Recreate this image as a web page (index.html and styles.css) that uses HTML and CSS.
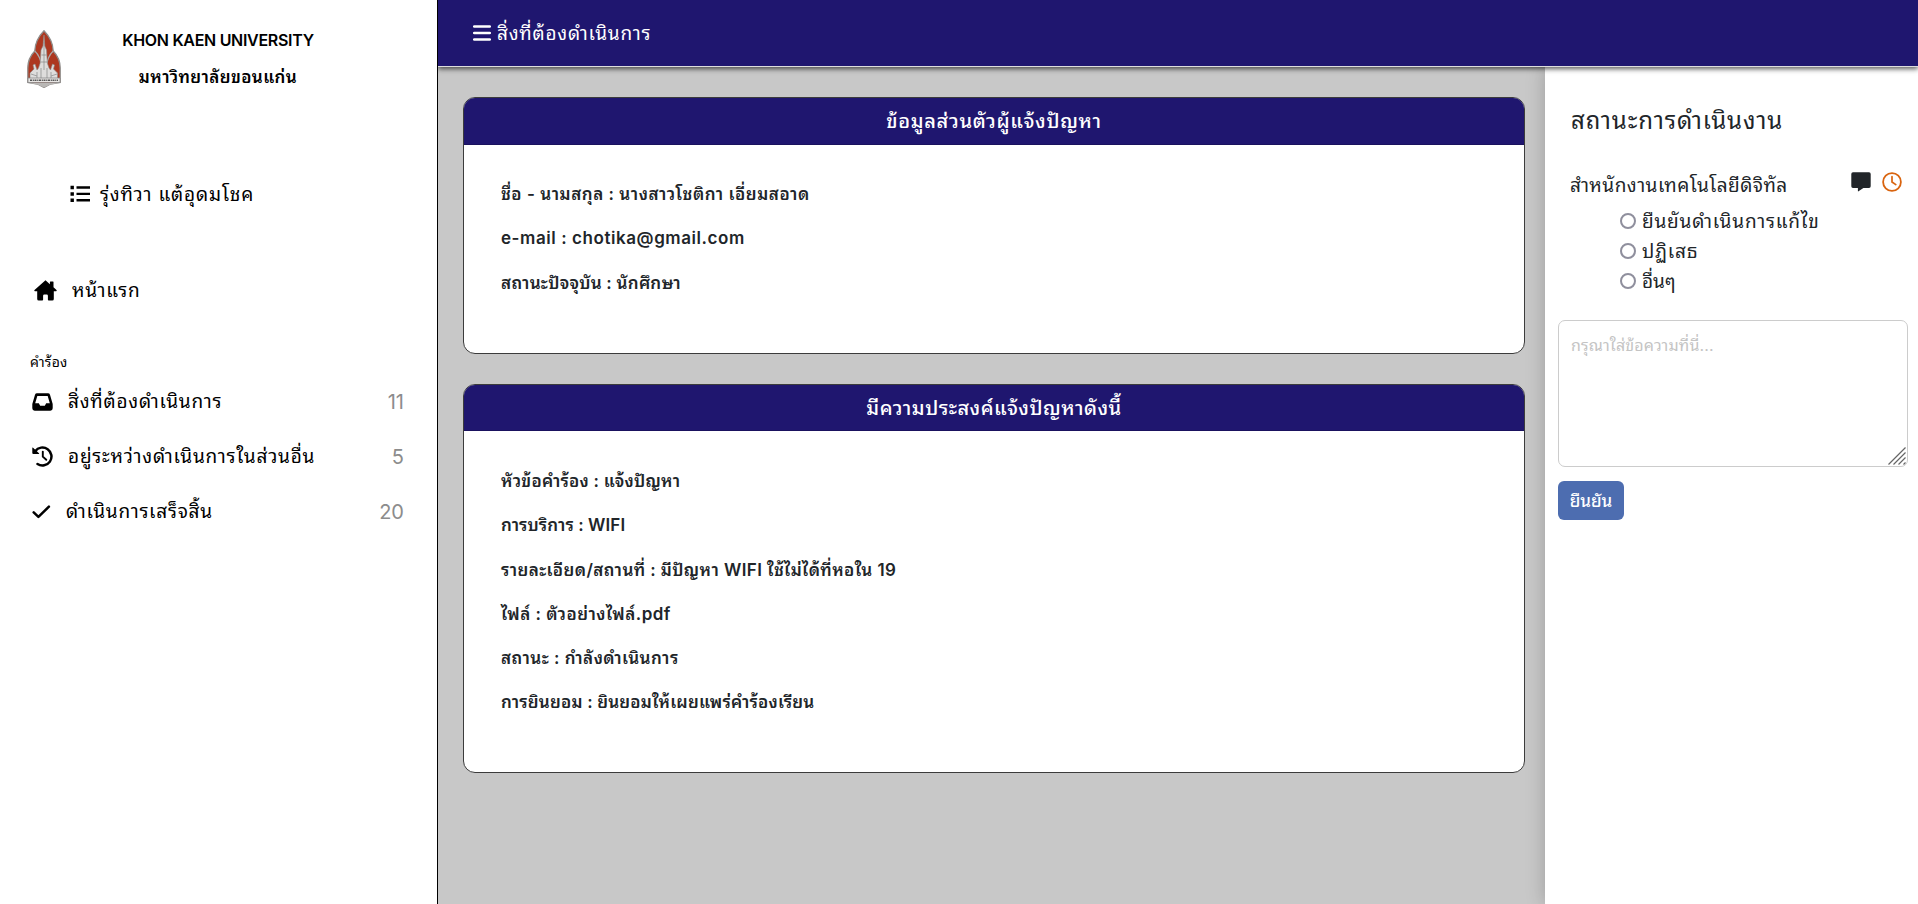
FILE: index.html
```html
<!DOCTYPE html>
<html lang="th">
<head>
<meta charset="utf-8">
<title>สิ่งที่ต้องดำเนินการ</title>
<link rel="stylesheet" href="styles.css">
</head>
<body>
<div class="app">
  <aside class="sidebar">
    <div class="brand">
      <svg class="logo" viewBox="0 0 34 58" width="34" height="58">
        <path d="M17 .8C11 7 8 14 7.8 21 3 26 .8 31 .8 38v14.500l9.700 1.500L17 57.500l6.500-3.500 9.700-1.500V38c0-7-2.200-12-7-17C26 14 23 7 17 .8z" fill="#ad3820" stroke="#8f8d8b" stroke-width="1.300"/>
        <path d="M7.800 21C12 25 14 30 15 37M26.200 21C22 25 20 30 19 37" fill="none" stroke="#aaa" stroke-width="1.200"/>
        <path d="M17 5l.8 11 1.700 4 .8 13 1.700 5 1.500 2 2-6 2 1-1 4 4 4v8H3V43l4-4-1-4 2-1 2 6 1.500-2 1.700-5L14 20l2-4z" fill="#dedddc" stroke="#8b8988" stroke-width=".6"/>
        <path d="M17 12v28M14.500 25h5M13.500 32h7M10 42v6M24 42v6M14 38v10M20 38v10M4 44l6 2M30 44l-6 2" fill="none" stroke="#888" stroke-width=".7"/>
        <path d="M1 48h32v4.500H1z" fill="#e8e6e4" stroke="#888" stroke-width=".8"/>
        <path d="M3 50.300h28" stroke="#555" stroke-width="1.600" stroke-dasharray="2 .7 1.200 .6"/>
        <path d="M1.500 53h31l-9 1.500-6.500 3-6.500-3z" fill="#b9b7b5"/>
      </svg>
      <div class="brand-text">
        <span class="brand-en">KHON KAEN UNIVERSITY</span>
        <span class="brand-th">มหาวิทยาลัยขอนแก่น</span>
      </div>
    </div>
    <div class="user">
      <svg width="20" height="18" viewBox="0 0 20 18"><path d="M.5.800h3.400v3.400H.5zM.5 7.300h3.400v3.400H.5zM.5 13.600h3.400V17H.5zM6.500 1.300H20v2.400H6.500zM6.500 7.700H20v2.400H6.500zM6.500 14H20v2.400H6.500z"/></svg>
      <span class="t-user">รุ่งทิวา แต้อุดมโชค</span>
    </div>
    <div class="home">
      <svg width="23" height="21" viewBox="0 0 23 21"><path d="M11.500.3L.5 10q-.5.500 0 1l.4.300H3.200V19q0 1.500 1.500 1.500h3.600q.8 0 .8-.8v-4q0-1.200 1.200-1.200h2.400q1.200 0 1.200 1.200v4q0 .8.800.8h3.600q1.500 0 1.500-1.500v-7.700h2.300l.4-.3q.5-.5 0-1L19.500 7.200V2q0-.5-.5-.5h-2.600q-.5 0-.5.500v2.200z"/></svg>
      <span class="t-home">หน้าแรก</span>
    </div>
    <div class="group">คำร้อง</div>
    <a class="item">
      <svg width="21" height="18" viewBox="0 0 21 18"><path fill-rule="evenodd" d="M5 .3h11q1.500 0 2 1.400l2.400 8.300q.3.700.3 1.500v3.800q0 2.400-2.400 2.400H2.700Q.3 17.700.3 15.300v-3.800q0-.8.300-1.500L3 1.700Q3.500.3 5 .3zM5.300 2.900L3.200 10.200h3.600l1.400 2.500h4.600l1.400-2.500h3.600L15.700 2.900z"/></svg>
      <span class="t-todo">สิ่งที่ต้องดำเนินการ</span><b class="count">11</b>
    </a>
    <a class="item">
      <svg width="21" height="21" viewBox="0 0 21 21"><path d="M3.200 5.200A9 9 0 1 1 5.500 18" fill="none" stroke="#000" stroke-width="2.500" stroke-linecap="round"/><path d="M.3 2q0-1 .8-.3L7 7.200q.6.700-.3.700H1.300q-1 0-1-1z"/><path d="M10.800 5.600v5l3.500 3.200" fill="none" stroke="#000" stroke-width="1.900" stroke-linecap="round"/></svg>
      <span class="t-wait">อยู่ระหว่างดำเนินการในส่วนอื่น</span><b class="count">5</b>
    </a>
    <a class="item">
      <svg width="19" height="14" viewBox="0 0 19 14"><path d="M1.700 7.400l4.700 4.500L16.900 1.700" fill="none" stroke="#000" stroke-width="2.500" stroke-linecap="round" stroke-linejoin="round"/></svg>
      <span class="t-done">ดำเนินการเสร็จสิ้น</span><b class="count">20</b>
    </a>
  </aside>
  <div class="page">
    <header class="topbar">
      <svg width="18" height="16" viewBox="0 0 18 16"><path d="M1.200 1.500h15.600M1.200 8h15.600M1.200 14.500h15.600" stroke="#fff" stroke-width="2.600" stroke-linecap="round"/></svg>
      <span class="t-todo">สิ่งที่ต้องดำเนินการ</span>
    </header>
    <div class="content">
      <main class="main">
        <section class="card person">
          <h2 class="card-head"><span class="h-one">ข้อมูลส่วนตัวผู้แจ้งปัญหา</span></h2>
          <div class="card-body">
            <p><span class="p1">ชื่อ - นามสกุล : นางสาวโชติกา เอี่ยมสอาด</span></p>
            <p><span class="p2">e-mail : chotika@gmail.com</span></p>
            <p><span class="p3">สถานะปัจจุบัน : นักศึกษา</span></p>
          </div>
        </section>
        <section class="card request">
          <h2 class="card-head"><span class="h-two">มีความประสงค์แจ้งปัญหาดังนี้</span></h2>
          <div class="card-body">
            <p><span class="r1">หัวข้อคำร้อง : แจ้งปัญหา</span></p>
            <p><span class="r2">การบริการ : WIFI</span></p>
            <p><span class="r3">รายละเอียด/สถานที่ : มีปัญหา WIFI ใช้ไม่ได้ที่หอใน 19</span></p>
            <p><span class="r4">ไฟล์ : ตัวอย่างไฟล์.pdf</span></p>
            <p><span class="r5">สถานะ : กำลังดำเนินการ</span></p>
            <p><span class="r6">การยินยอม : ยินยอมให้เผยแพร่คำร้องเรียน</span></p>
          </div>
        </section>
      </main>
      <aside class="status">
        <h1 class="status-title"><span class="t-status">สถานะการดำเนินงาน</span></h1>
        <div class="office">
          <span class="t-office">สำหนักงานเทคโนโลยีดิจิทัล</span>
          <svg class="chat" width="20" height="20" viewBox="0 0 20 20"><path d="M2 .3h16q1.700 0 1.700 1.700v12.200q0 1.700-1.700 1.700h-5.600L7.500 19.300q-.6.400-.6-.3v-3.100H2q-1.700 0-1.700-1.700V2Q.3.300 2 .3z" fill="#212529"/></svg>
          <svg width="20" height="20" viewBox="0 0 20 20"><circle cx="10" cy="10" r="8.900" fill="none" stroke="#d9640f" stroke-width="1.800"/><path d="M10 4.700V10l3.800 2.600" fill="none" stroke="#d9640f" stroke-width="1.700" stroke-linecap="round"/></svg>
        </div>
        <div class="options">
          <label><i class="radio"></i><span class="o1">ยืนยันดำเนินการแก้ไข</span></label>
          <label><i class="radio"></i><span class="o2">ปฏิเสธ</span></label>
          <label><i class="radio"></i><span class="o3">อื่นๆ</span></label>
        </div>
        <div class="field">
          <span class="t-field">กรุณาใส่ข้อความที่นี่...</span>
          <svg class="grip" width="18" height="18" viewBox="0 0 18 18"><path d="M.5 17.500l17-17M5.500 17.500l12-12M10.500 17.500l7-7M15.500 17.500l2-2" stroke="#666" stroke-width="1.200"/></svg>
        </div>
        <button class="confirm"><span class="t-confirm">ยืนยัน</span></button>
      </aside>
    </div>
  </div>
</div>
</body>
</html>
```
FILE: styles.css
```css
* { box-sizing: border-box; }
body { margin: 0; font-family: Inter, "Noto Sans Thai Looped", Loma, "Noto Sans Thai", "Noto Sans", Tahoma, sans-serif; color: #212529; background: #fff; }
h1, h2, p { margin: 0; font-weight: 400; }
svg { display: block; flex: none; }
span { white-space: nowrap; }
.app { display: flex; width: 1918px; height: 904px; overflow: hidden; }
.sidebar { position: relative; z-index: 3; width: 438px; flex: none; background: #fff; border-right: 1px solid #000; color: #000; font-size: 19px; }
.brand { display: flex; height: 118px; padding: 30px 0 0 27px; }
.brand-text { width: 314px; display: flex; flex-direction: column; align-items: center; font-size: 16px; font-weight: 600; line-height: 37px; margin-top: -8px; }
.brand-en { letter-spacing: -.3px; }
.brand-th { font-size: 17px; letter-spacing: .4px; }
.user { display: flex; align-items: center; height: 60px; margin: 46px 0 44px; padding-left: 70px; gap: 10px; }
.home { display: flex; align-items: center; height: 44px; margin-bottom: 30px; padding-left: 34px; gap: 15px; }
.user span, .home span, .item span, .topbar span { margin-bottom: 4px; }
.group { height: 40px; padding-left: 30px; font-size: 14px; line-height: 40px; letter-spacing: .2px; }
.item { display: flex; align-items: center; height: 55px; padding: 0 33px 0 32px; gap: 15px; }
.group + .item { margin-top: -8px; }
.count { margin-left: auto; color: #8c8c8c; font-size: 20px; font-weight: 400; }
.t-user { letter-spacing: .85px; }
.t-home { letter-spacing: .6px; }
.t-todo { letter-spacing: .77px; }
.t-wait { letter-spacing: .78px; }
.t-done { letter-spacing: .75px; }
.page { flex: 1; display: flex; flex-direction: column; }
.topbar { position: relative; z-index: 2; display: flex; align-items: center; height: 67px; padding-left: 35px; gap: 6px; flex: none; background: #1f166f; border-bottom: 1px solid #ddd; color: #fff; font-size: 19px; box-shadow: 0 2px 5px rgba(0, 0, 0, .65); }
.content { flex: 1; display: flex; background: #c8c8c8; }
.main { flex: 1; padding: 30px 20px 0 25px; }
.card { border: 1px solid #3c3c3c; border-radius: 12px; overflow: hidden; background: #fff; }
.person { height: 257px; margin-bottom: 30px; }
.request { height: 389px; }
.card-head { height: 47px; background: #1f166f; color: #fff; display: flex; align-items: center; justify-content: center; font-size: 20px; font-weight: 500; border-bottom: 1px solid #1a125e; }
.card-head span { margin-bottom: 4px; }
.request .card-head { height: 46px; }
.h-one { letter-spacing: .7px; }
.h-two { letter-spacing: .47px; }
.card-body { padding: 28px 37px; font-size: 17px; font-weight: 600; }
.person .card-body { padding-top: 27px; }
.card-body p { height: 44.3px; line-height: 44px; font-weight: inherit; }
.p1 { letter-spacing: .53px; }
.p2 { letter-spacing: .57px; }
.p3 { letter-spacing: .26px; }
.r1 { letter-spacing: .24px; }
.r2 { letter-spacing: .1px; }
.r3 { letter-spacing: .41px; }
.r4, .r5 { letter-spacing: .48px; }
.r6 { letter-spacing: .2px; }
.status { position: relative; z-index: 1; width: 373px; flex: none; background: #fff; padding: 26px 10px 0 13px; box-shadow: 0 0 18px rgba(0, 0, 0, .22); }
.status-title { height: 56px; line-height: 56px; padding-left: 13px; font-size: 24px; }
.t-status { letter-spacing: .9px; }
.office { display: flex; align-items: center; height: 40px; margin-top: 15px; padding: 0 6px 0 12px; gap: 11px; font-size: 19px; }
.t-office { margin-bottom: 2px; letter-spacing: .45px; }
.office svg { margin-top: -4px; }
.chat { margin-left: auto; }
.options { padding-left: 62px; margin-top: 2px; font-size: 19px; }
.options label { display: flex; align-items: center; height: 30px; gap: 6px; }
.options span { margin-bottom: 4px; }
.radio { width: 16px; height: 16px; border: 2px solid #8f8f9d; border-radius: 50%; }
.o1, .o2 { letter-spacing: .8px; }
.field { position: relative; width: 350px; height: 147px; margin-top: 24px; border: 1px solid #ccc; border-radius: 7px; padding: 4px 12px; color: #c4c4c4; font-size: 16px; line-height: 40px; }
.t-field { letter-spacing: .15px; }
.grip { position: absolute; right: 1px; bottom: 1px; }
.confirm { display: flex; align-items: center; justify-content: center; width: 66px; height: 39px; margin-top: 14px; padding: 0; border: 0; border-radius: 6px; background: #4d6db0; color: #fff; font-family: inherit; font-size: 17px; font-weight: 500; }
.t-confirm { margin-bottom: 3px; }
```
